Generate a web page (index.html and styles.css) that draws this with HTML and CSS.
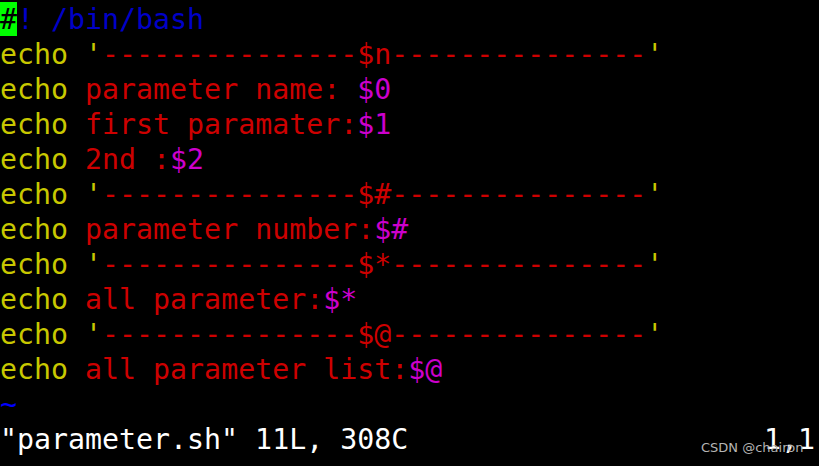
FILE: index.html
```html
<!DOCTYPE html>
<html>
<head>
<meta charset="utf-8">
<link rel="stylesheet" href="styles.css">
</head>
<body>
<div class="term">
<div class="line"><span class="cursor">#</span><span class="blue">! /bin/bash</span></div>
<div class="line"><span class="yel">echo</span> <span class="yel">'</span><span class="red">---------------$n---------------</span><span class="yel">'</span></div>
<div class="line"><span class="yel">echo</span> <span class="red">parameter name: </span><span class="mag">$0</span></div>
<div class="line"><span class="yel">echo</span> <span class="red">first paramater:</span><span class="mag">$1</span></div>
<div class="line"><span class="yel">echo</span> <span class="red">2nd :</span><span class="mag">$2</span></div>
<div class="line"><span class="yel">echo</span> <span class="yel">'</span><span class="red">---------------$#---------------</span><span class="yel">'</span></div>
<div class="line"><span class="yel">echo</span> <span class="red">parameter number:</span><span class="mag">$#</span></div>
<div class="line"><span class="yel">echo</span> <span class="yel">'</span><span class="red">---------------$*---------------</span><span class="yel">'</span></div>
<div class="line"><span class="yel">echo</span> <span class="red">all parameter:</span><span class="mag">$*</span></div>
<div class="line"><span class="yel">echo</span> <span class="yel">'</span><span class="red">---------------$@---------------</span><span class="yel">'</span></div>
<div class="line"><span class="yel">echo</span> <span class="red">all parameter list:</span><span class="mag">$@</span></div>
<div class="line"><span class="tilde">~</span></div>
<div class="line status"><span>"parameter.sh" 11L, 308C</span><span class="ruler">1,1</span></div>
</div>
<div class="watermark">CSDN @chairon</div>
</body>
</html>
```
FILE: styles.css
```css
html, body {
  margin: 0;
  padding: 0;
  background: #000;
  width: 819px;
  height: 466px;
  overflow: hidden;
}
body {
  position: relative;
}
.term {
  padding-top: 2px;
  font-family: "DejaVu Sans Mono", monospace;
  font-size: 28.25px;
  color: #fff;
}
.line {
  height: 35px;
  line-height: 35px;
  white-space: pre;
}
.cursor {
  display: inline-block;
  background: #00ff00;
  color: #000;
  height: 34px;
  line-height: 35px;
  vertical-align: top;
}
.blue { color: #0000c8; }
.yel { color: #c8c800; }
.red { color: #cd0000; }
.mag { color: #cc00cc; }
.tilde { color: #0000ff; }
.status {
  display: flex;
  justify-content: space-between;
  padding-right: 4px;
  color: #fff;
}
.watermark {
  position: absolute;
  left: 701px;
  top: 440px;
  font-family: "DejaVu Sans", sans-serif;
  font-size: 13px;
  color: #b4b4b4;
  white-space: nowrap;
}
```
